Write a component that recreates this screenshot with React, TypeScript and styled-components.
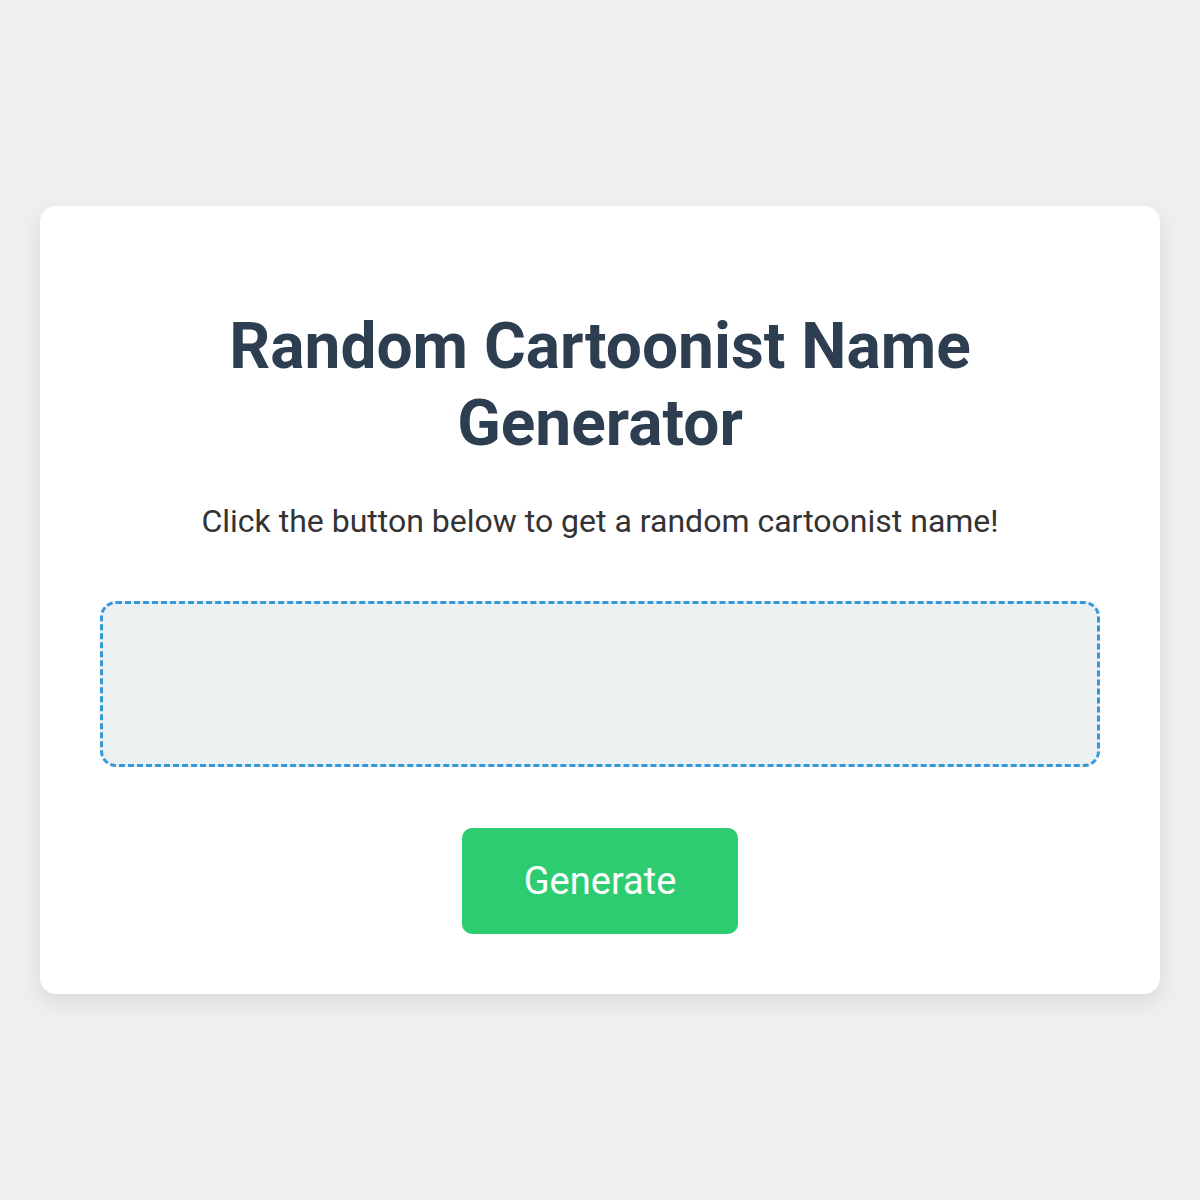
import React, { useState } from "react"
import styled, { createGlobalStyle } from "styled-components"

const GlobalStyle = createGlobalStyle`
* { box-sizing: border-box; }
body {
  margin: 0;
  background-color: #f0f0f0;
  font-family: Roboto, "Liberation Sans", Arial, sans-serif;
}
`

const names = [
  "Charles Schulz",
  "Bill Watterson",
  "Gary Larson",
  "Jim Davis",
  "Tove Jansson",
  "Hergé",
]

const App = () => {
  const [name, setName] = useState("")

  return (
    <>
      <GlobalStyle />
      <Page>
        <Card>
          <Title>Random Cartoonist Name Generator</Title>
          <Intro>Click the button below to get a random cartoonist name!</Intro>
          <Result>{name}</Result>
          <Button onClick={() => setName(names[Math.floor(Math.random() * names.length)])}>
            Generate
          </Button>
        </Card>
      </Page>
    </>
  )
}

export default App

const Page = styled.div`
min-height: 100vh;
display: flex;
align-items: center;
justify-content: center;
padding: 0 40px;
`

const Card = styled.div`
width: 100%;
background-color: #fff;
border-radius: 16px;
padding: 60px;
box-shadow: 0 8px 24px rgba(0, 0, 0, 0.1);
display: flex;
flex-direction: column;
align-items: center;
text-align: center;
`

const Title = styled.h1`
font-size: 64px;
font-weight: 700;
color: #2c3e50;
margin: 42px 0 40px;
line-height: 77px;
`

const Intro = styled.p`
font-size: 32px;
color: #333;
margin: 0 0 61px;
line-height: 38px;
`

const Result = styled.div`
width: 100%;
min-height: 166px;
border: 3px dashed #3498db;
border-radius: 16px;
background-color: #ecf0f1;
margin-bottom: 61px;
display: flex;
align-items: center;
justify-content: center;
font-size: 40px;
font-weight: 700;
color: #2c3e50;
`

const Button = styled.button`
font-family: Roboto, "Liberation Sans", Arial, sans-serif;
font-size: 38px;
line-height: 44px;
color: #fff;
background-color: #2ecc71;
border: none;
border-radius: 10px;
padding: 31px 62px;
cursor: pointer;
`
